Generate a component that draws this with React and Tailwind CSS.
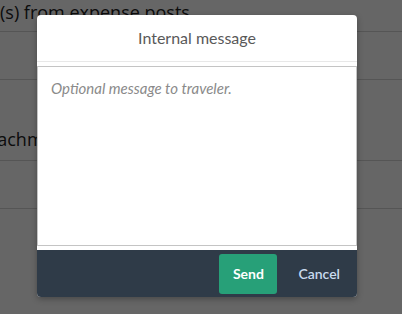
import React from "react";

export default function App() {
  return (
    <div className="relative w-[402px] h-[314px] overflow-hidden bg-white" style={{ fontFamily: "Lato, 'Open Sans', sans-serif" }}>
      {/* background page */}
      <div className="flex flex-col text-[#222] text-[18px] [font-family:'Open_Sans',sans-serif]">
        <div className="h-[32px] border-b border-[#d5d5d5] flex items-end pb-[10px] leading-none">
          <span className="mt-[-6px]">(s) from expense posts</span>
        </div>
        <div className="h-[48px] border-b border-[#d5d5d5]" />
        <div className="h-[81px] border-b border-[#d5d5d5] flex items-center pt-[38px]">
          <span className="ml-[-27px]">Attachments</span>
        </div>
        <div className="h-[48px] border-b border-[#d5d5d5]" />
        <div className="flex-1" />
      </div>
      {/* overlay */}
      <div className="absolute inset-0 bg-black/60" />
      {/* dialog */}
      <div className="absolute left-[37px] top-[15px] w-[320px] h-[282px] flex flex-col rounded-[4px] overflow-hidden bg-white shadow-[0_2px_6px_rgba(0,0,0,0.3)]">
        <div className="h-[47px] shrink-0 flex items-center justify-center border-b border-[#e8e8e8] text-[16px] text-[#595959]">
          Internal message
        </div>
        <div className="flex-1 flex flex-col pt-[4px] pb-[4px] bg-white">
          <div className="flex-1 border border-[#c4c4c4] px-[13px] pt-[10px] text-[15px] italic text-[#8a8a8a]">
            Optional message to traveler.
          </div>
        </div>
        <div className="h-[47px] shrink-0 bg-[#2f3b48] flex items-center justify-end gap-[21px] pr-[17px]">
          <button className="w-[58px] h-[40px] rounded-[3px] bg-[#27a078] text-white text-[14px] font-bold">
            Send
          </button>
          <button className="text-[14px] font-semibold text-[#c9daee]">
            Cancel
          </button>
        </div>
      </div>
    </div>
  );
}
